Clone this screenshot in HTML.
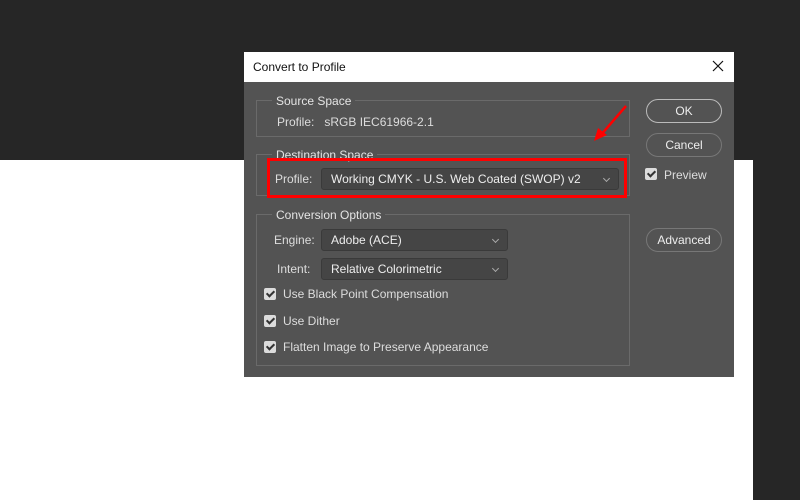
<!DOCTYPE html>
<html><head><style>
*{margin:0;padding:0;box-sizing:border-box}
body{width:800px;height:500px;position:relative;overflow:hidden;background:#262626;font-family:"Liberation Sans",Arial,sans-serif;font-size:12px;color:#ddd}
.a{position:absolute}
.grp{position:absolute;border:1px solid #6a6a6a}
.leg{position:absolute;background:#535353;padding:0 4px;color:#e4e4e4;font-size:12px;top:-7px;left:15px}
.sel{position:absolute;background:#454545;border:1px solid #3a3a3a;border-radius:3px;height:22px;color:#eee;padding:3px 0 0 9px}
.sel:after{content:"";position:absolute;right:9px;top:7px;width:4px;height:4px;border-right:1px solid #aaa;border-bottom:1px solid #aaa;transform:rotate(45deg)}
.btn{position:absolute;left:646px;width:76px;height:24px;border:1px solid #8a8a8a;border-radius:12px;text-align:center;line-height:22px;color:#eee}
.cb{position:absolute;width:12px;height:12px;background:#dcdcdc;border-radius:2px}
.cb:after{content:"";position:absolute;left:4px;top:1px;width:3px;height:6px;border-right:2px solid #333;border-bottom:2px solid #333;transform:rotate(45deg)}
</style></head><body>
<div class="a" style="left:0;top:160px;width:753px;height:340px;background:#fff"></div>
<div class="a" style="left:244px;top:52px;width:490px;height:325px;background:#535353"></div>
<div class="a" style="left:244px;top:52px;width:490px;height:30px;background:#fff;color:#111;padding:8px 0 0 9px">Convert to Profile</div>
<svg class="a" style="left:712px;top:60px" width="12" height="12"><path d="M1 1L11 11M11 1L1 11" stroke="#111" stroke-width="1.2"/></svg>

<div class="grp" style="left:256px;top:100px;width:374px;height:37px"><span class="leg">Source Space</span></div>
<div class="a" style="left:277px;top:115px">Profile:&nbsp;&nbsp; sRGB IEC61966-2.1</div>

<div class="grp" style="left:256px;top:154px;width:374px;height:42px"><span class="leg">Destination Space</span></div>
<div class="a" style="left:275px;top:172px">Profile:</div>
<div class="sel" style="left:321px;top:168px;width:298px">Working CMYK - U.S. Web Coated (SWOP) v2</div>
<div class="a" style="left:267px;top:158px;width:360px;height:40px;border:3px solid #f00"></div>

<div class="grp" style="left:256px;top:214px;width:374px;height:152px"><span class="leg">Conversion Options</span></div>
<div class="a" style="left:274px;top:233px">Engine:</div>
<div class="sel" style="left:321px;top:229px;width:187px">Adobe (ACE)</div>
<div class="a" style="left:277px;top:262px">Intent:</div>
<div class="sel" style="left:321px;top:258px;width:187px">Relative Colorimetric</div>
<div class="cb" style="left:264px;top:288px"></div><div class="a" style="left:283px;top:287px">Use Black Point Compensation</div>
<div class="cb" style="left:264px;top:315px"></div><div class="a" style="left:283px;top:314px">Use Dither</div>
<div class="cb" style="left:264px;top:341px"></div><div class="a" style="left:283px;top:340px">Flatten Image to Preserve Appearance</div>

<div class="btn" style="top:99px;border-color:#bbb">OK</div>
<div class="btn" style="top:133px;border-color:#777">Cancel</div>
<div class="cb" style="left:645px;top:168px"></div><div class="a" style="left:664px;top:168px">Preview</div>
<div class="btn" style="top:228px;border-color:#777">Advanced</div>

<svg class="a" style="left:0;top:0" width="800" height="500"><line x1="626" y1="106" x2="600" y2="136" stroke="#f00" stroke-width="2.5"/><polygon points="594,141 598,128 607,135" fill="#f00"/></svg>
</body></html>
